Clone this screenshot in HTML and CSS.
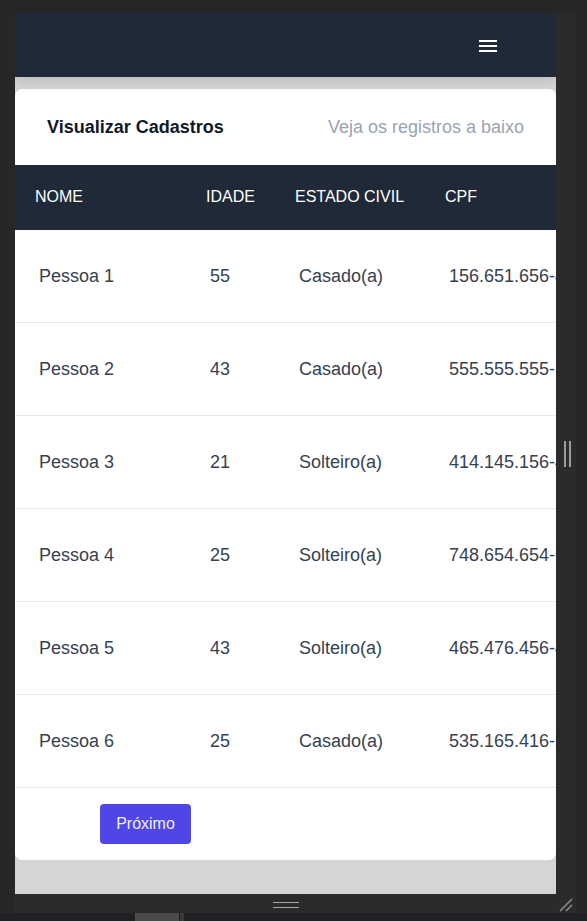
FILE: index.html
```html
<!DOCTYPE html>
<html lang="pt-BR">
<head>
<meta charset="utf-8">
<title>Visualizar Cadastros</title>
<link rel="stylesheet" href="styles.css">
</head>
<body>
<div class="frame">
  <div class="frame-top"></div>
  <div class="frame-mid">
    <div class="frame-left"></div>
    <div class="viewport">
      <nav class="navbar">
        <button class="menu-btn" aria-label="Menu">
          <svg width="18" height="12" viewBox="0 0 18 12"><rect x="0" y="0" width="18" height="2" fill="#fff"/><rect x="0" y="5" width="18" height="2" fill="#fff"/><rect x="0" y="10" width="18" height="2" fill="#fff"/></svg>
        </button>
      </nav>
      <main class="page">
        <section class="card">
          <header class="card-head">
            <h1 class="card-title">Visualizar Cadastros</h1>
            <p class="card-sub">Veja os registros a baixo</p>
          </header>
          <div class="table">
            <div class="tr th-row">
              <div class="th">NOME</div>
              <div class="th">IDADE</div>
              <div class="th">ESTADO CIVIL</div>
              <div class="th">CPF</div>
            </div>
            <div class="tr"><div class="td">Pessoa 1</div><div class="td">55</div><div class="td">Casado(a)</div><div class="td">156.651.656-45</div></div>
            <div class="tr"><div class="td">Pessoa 2</div><div class="td">43</div><div class="td">Casado(a)</div><div class="td">555.555.555-55</div></div>
            <div class="tr"><div class="td">Pessoa 3</div><div class="td">21</div><div class="td">Solteiro(a)</div><div class="td">414.145.156-41</div></div>
            <div class="tr"><div class="td">Pessoa 4</div><div class="td">25</div><div class="td">Solteiro(a)</div><div class="td">748.654.654-65</div></div>
            <div class="tr"><div class="td">Pessoa 5</div><div class="td">43</div><div class="td">Solteiro(a)</div><div class="td">465.476.456-45</div></div>
            <div class="tr"><div class="td">Pessoa 6</div><div class="td">25</div><div class="td">Casado(a)</div><div class="td">535.165.416-51</div></div>
          </div>
          <footer class="card-foot">
            <button class="btn-next">Próximo</button>
          </footer>
        </section>
      </main>
    </div>
    <div class="side-band">
      <span class="vhandle"></span>
    </div>
    <div class="frame-rest"></div>
  </div>
  <div class="frame-bottom">
    <div class="bottom-strip">
      <span class="hhandle"></span>
      <svg class="resize" width="14" height="14" viewBox="0 0 14 14"><line x1="1" y1="13" x2="13" y2="1" stroke="#8a8a8a" stroke-width="1.6"/><line x1="7" y1="13" x2="13" y2="7" stroke="#8a8a8a" stroke-width="1.6"/></svg>
    </div>
  </div>
  <div class="taskbar">
    <span class="task-item"></span>
    <span class="task-sep"></span>
  </div>
</div>
</body>
</html>
```

FILE: styles.css
```css
* { box-sizing: border-box; }

html, body {
  margin: 0;
  padding: 0;
}

body {
  background: #272727;
  font-family: "Liberation Sans", Arial, sans-serif;
  width: 587px;
  height: 921px;
  overflow: hidden;
}

.frame {
  display: flex;
  flex-direction: column;
  width: 587px;
  height: 921px;
}

.frame-top {
  height: 13px;
  background: #262626;
}

.frame-mid {
  display: flex;
  height: 881px;
}

.frame-left {
  width: 15px;
  background: #272727;
}

.viewport {
  width: 541px;
  height: 881px;
  background: #d5d5d5;
  display: flex;
  flex-direction: column;
  overflow: hidden;
}

.navbar {
  height: 64px;
  flex: none;
  background: #1f2937;
  display: flex;
  align-items: center;
  justify-content: flex-end;
  padding-right: 59px;
  box-shadow: 0 4px 12px rgba(0, 0, 0, 0.12);
  position: relative;
  z-index: 1;
}

.menu-btn {
  background: none;
  border: 0;
  padding: 0;
  margin: 0;
  display: flex;
  margin-top: 1px;
}

.page {
  padding-top: 12px;
  flex: 1;
}

.card {
  background: #fff;
  border-radius: 7px;
  overflow: hidden;
}

.card-head {
  height: 76px;
  display: flex;
  align-items: center;
  justify-content: space-between;
  padding: 0 32px;
}

.card-title {
  margin: 0;
  font-size: 18px;
  font-weight: 700;
  color: #111827;
}

.card-sub {
  margin: 0;
  font-size: 18px;
  color: #9ca3af;
}

.table {
  width: 610px;
}

.tr {
  display: grid;
  grid-template-columns: 171px 89px 150px 200px;
  height: 93px;
  align-items: center;
  border-bottom: 1px solid #e5e7eb;
}

.th-row {
  height: 65px;
  background: #1f2937;
  border-bottom: 0;
  padding-bottom: 2px;
}

.th {
  padding-left: 20px;
  color: #fff;
  font-size: 16px;
  white-space: nowrap;
}

.td {
  padding-left: 24px;
  color: #374151;
  font-size: 18px;
  white-space: nowrap;
}

.card-foot {
  height: 72px;
  padding: 16px 0 0 85px;
}

.btn-next {
  width: 91px;
  height: 40px;
  background: #4f46e5;
  color: #eef0ff;
  border: 0;
  border-radius: 4px;
  font-family: "Liberation Sans", Arial, sans-serif;
  font-size: 16px;
  padding: 0;
}

.side-band {
  width: 20px;
  background: #2b2b2b;
  display: flex;
  align-items: flex-start;
  justify-content: center;
  padding-top: 428px;
}

.vhandle {
  width: 7px;
  height: 26px;
  border-left: 2.5px solid #9c9c9c;
  border-right: 2.5px solid #9c9c9c;
  margin-left: 2px;
}

.frame-rest {
  flex: 1;
  background: #262626;
}

.frame-bottom {
  height: 19px;
  display: flex;
  background: #272727;
}

.bottom-strip {
  margin-left: 15px;
  width: 561px;
  background: #2b2b2b;
  display: flex;
  align-items: flex-start;
  position: relative;
}

.hhandle {
  margin-left: 258px;
  margin-top: 8px;
  width: 26px;
  height: 6px;
  border-top: 1.5px solid #a8a8a8;
  border-bottom: 1.5px solid #a8a8a8;
}

.resize {
  position: absolute;
  right: 3px;
  top: 4px;
}

.taskbar {
  height: 8px;
  background: #202124;
  display: flex;
  padding-left: 135px;
}

.task-item {
  width: 44px;
  background: #4b4b4b;
}

.task-sep {
  width: 4px;
  margin-left: 1px;
  background: #3a3a3a;
}
```
